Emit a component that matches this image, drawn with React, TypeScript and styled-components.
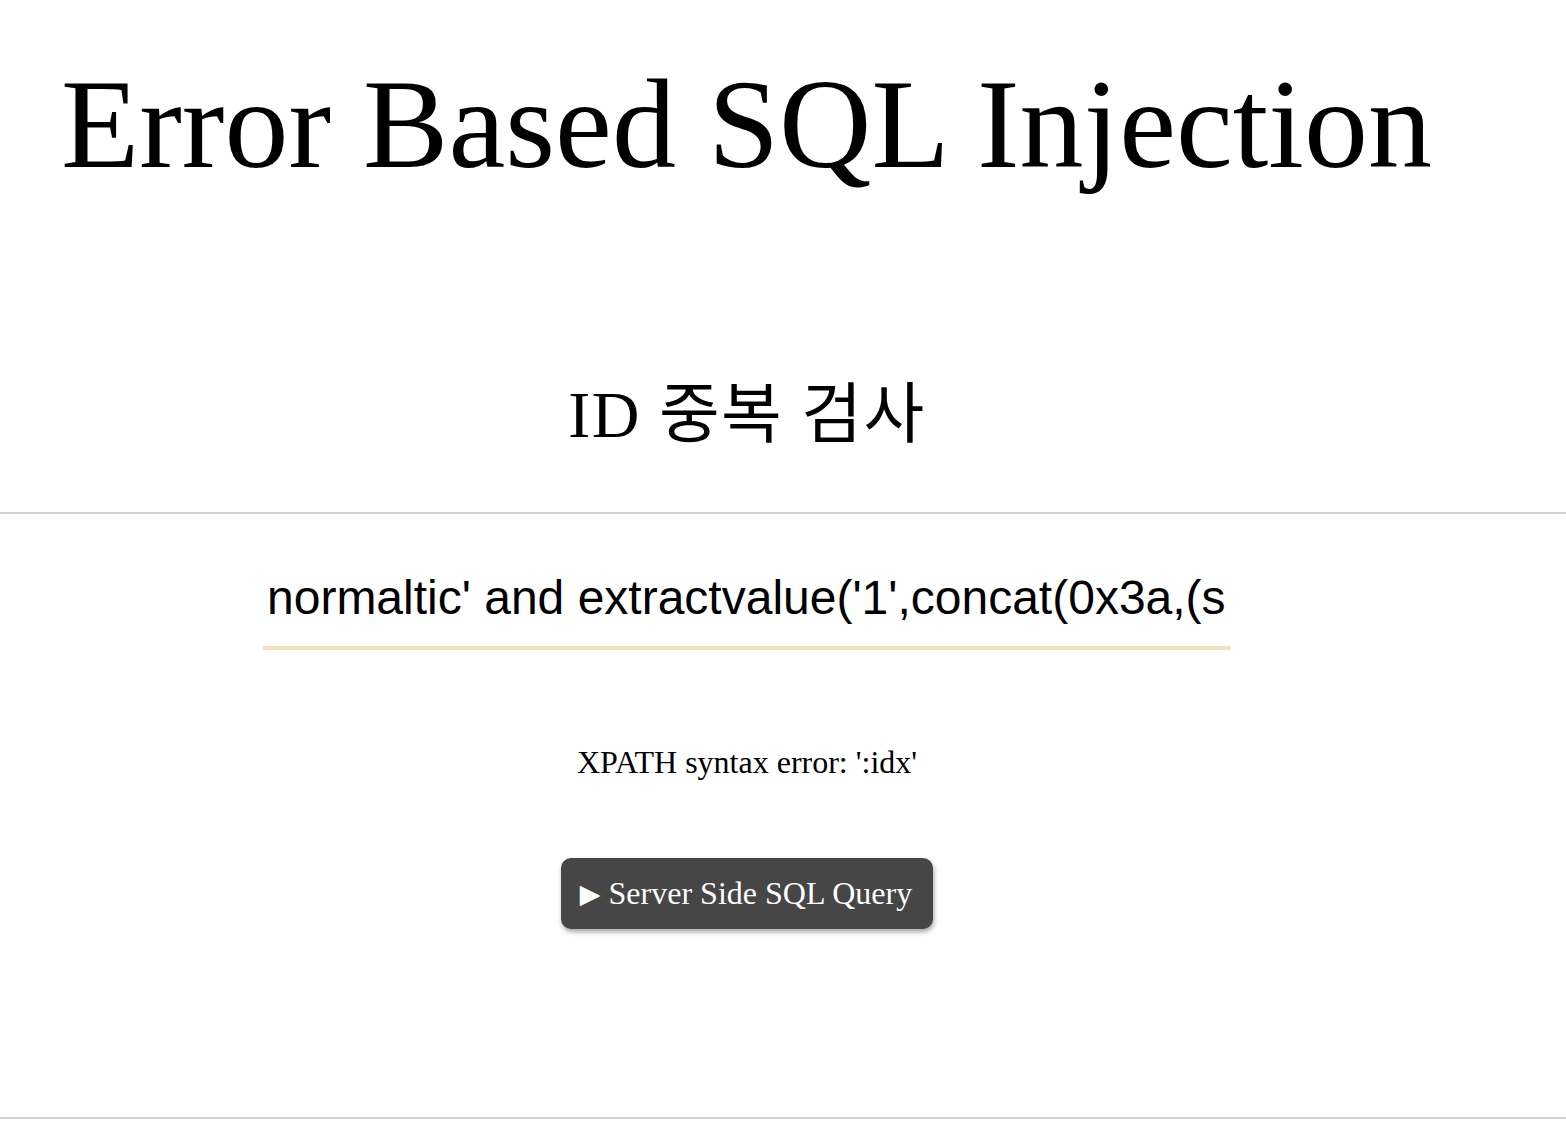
import React from 'react';
import styled, { createGlobalStyle } from 'styled-components';

const GlobalStyle = createGlobalStyle`
  html, body {
    margin: 0;
    padding: 0;
    background: #FFFFFF;
  }
  body {
    font-family: 'Liberation Serif', 'Noto Sans CJK KR', serif;
    color: #000000;
  }
`

const contentWidth = "1494px"

const Page = styled.div`
  width: 100%;
  display: flex;
  flex-direction: column;
`

const Title = styled.h1`
  margin: 0;
  padding: 51px 0 0 61px;
  font-size: 128px;
  line-height: 147px;
  font-weight: 400;
`

const Center = styled.div`
  width: ${contentWidth};
  display: flex;
  flex-direction: column;
  align-items: center;
`

const Subtitle = styled.h2`
  margin: 180px 0 0;
  font-family: 'Liberation Serif', 'Noto Sans CJK KR', serif;
  font-size: 66px;
  line-height: 74px;
  font-weight: 400;
  letter-spacing: 1.5px;
`

const Divider = styled.hr<{ $top: number }>`
  width: 100%;
  height: 2px;
  margin: ${p => p.$top}px 0 0;
  border: 0;
  background: #D0D0D0;
`

const Form = styled.form`
  width: ${contentWidth};
  display: flex;
  flex-direction: column;
  align-items: center;
`

const IdInput = styled.input`
  box-sizing: border-box;
  width: 968px;
  height: 101px;
  margin-top: 35px;
  padding: 0 6px 0 4px;
  border: 0;
  border-bottom: 4px solid #F3E2BC;
  outline: none;
  background: transparent;
  font-family: 'Liberation Sans', Arial, sans-serif;
  font-size: 48px;
  color: #000000;
`

const ErrorMessage = styled.p`
  margin: 94px 0 0;
  font-size: 32px;
  line-height: 37px;
`

const QueryButton = styled.button`
  box-sizing: border-box;
  display: inline-flex;
  align-items: center;
  height: 71px;
  margin-top: 77px;
  padding: 0 21px 0 19px;
  border: 0;
  border-radius: 10px;
  background: #464646;
  box-shadow: 1px 3px 5px rgba(0, 0, 0, 0.35);
  color: #FFFFFF;
  font-family: 'Liberation Serif', serif;
  font-size: 32px;
  line-height: 37px;
  cursor: pointer;
`

const Arrow = styled.span`
  font-family: 'DejaVu Sans', sans-serif;
  font-size: 27px;
  margin-right: 8px;
`

const payload = "normaltic' and extractvalue('1',concat(0x3a,(select id from member where id='normaltic'))) and '1'='1"

function App() {
  return (
    <>
      <GlobalStyle />
      <Page>
        <Title>Error Based SQL Injection</Title>
        <Center>
          <Subtitle>ID 중복 검사</Subtitle>
        </Center>
        <Divider $top={60} />
        <Form onSubmit={e => e.preventDefault()}>
          <IdInput type="text" defaultValue={payload} />
          <ErrorMessage>XPATH syntax error: ':idx'</ErrorMessage>
          <QueryButton type="button">
            <Arrow>▶</Arrow>Server Side SQL Query
          </QueryButton>
        </Form>
        <Divider $top={188} />
      </Page>
    </>
  );
}

export default App;
